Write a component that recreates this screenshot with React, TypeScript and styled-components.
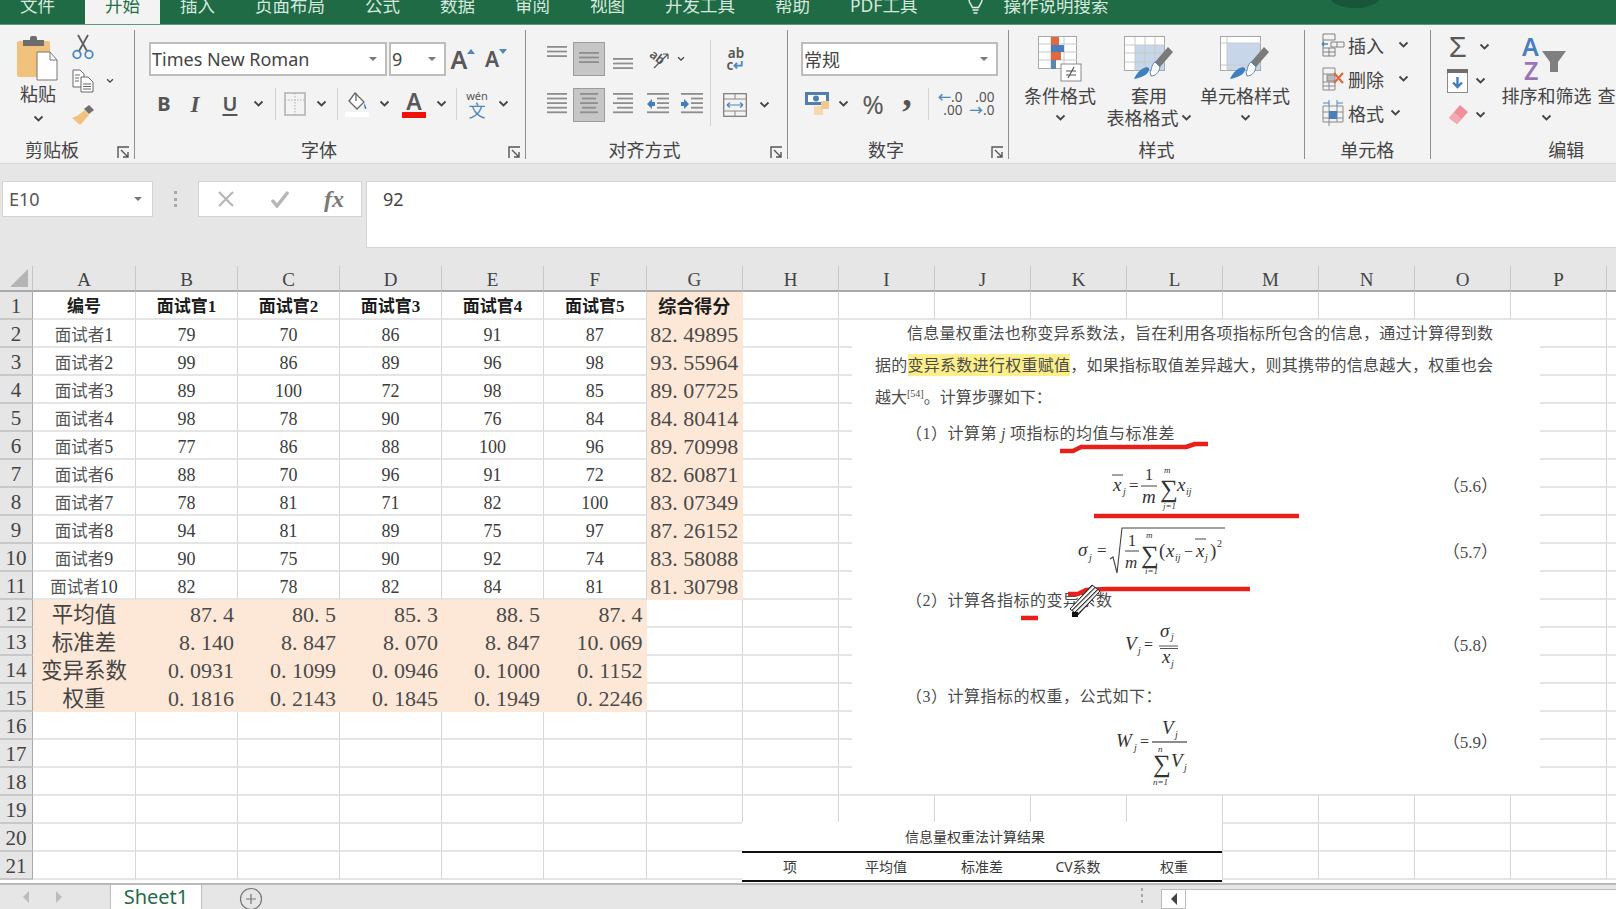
import React from "react";
import styled, { createGlobalStyle } from "styled-components";

const CJK = `"Noto Sans", "Noto Sans CJK SC", sans-serif`;
const SERIF = `"Liberation Serif", "Noto Sans CJK SC", serif`;

const Global = createGlobalStyle`
  html, body { margin: 0; padding: 0; background: #e6e6e6; overflow: hidden; }
  * { box-sizing: border-box; }
`;

const Page = styled.div`
  width: 1616px; height: 909px; display: flex; flex-direction: column; overflow: hidden;
  font-family: ${CJK}; color: #444; background: #e6e6e6;
`;

/* ---------- tabs ---------- */
const TabBar = styled.div`
  height: 25px; flex: none; background: #1f6b46; display: flex; align-items: flex-start;
  overflow: hidden; position: relative; border-bottom: 1px solid #5d9a7c;
`;
const Tab = styled.div<{ $active?: boolean }>`
  height: 32px; margin-top: -5px; line-height: 20px; font-size: 17.5px; padding: 0 20px; white-space: nowrap;
  color: ${p => (p.$active ? "#22704a" : "#d6e8de")};
  background: ${p => (p.$active ? "#f3f3f3" : "transparent")};
  margin-left: ${p => (p.$active ? "10px" : "0")};
`;
const SearchHint = styled.div`
  margin-top: -5px; line-height: 20px; font-size: 17.5px; color: #d6e8de; margin-left: 14px; white-space: nowrap;
`;
const BulbSlot = styled.div`
  margin: -8px 0 0 24px; width: 28px; height: 26px; color: #e4f0ea;
`;
const RibbonPattern = styled.div`
  position: absolute; left: 1330px; top: -14px; width: 50px; height: 22px; border-radius: 50%; background: #18563a;
`;

/* ---------- ribbon ---------- */
const Ribbon = styled.div`
  height: 139px; flex: none; background: #f3f3f3; display: flex; padding: 5px 0 4px;
  border-bottom: 1px solid #d8d8d8; overflow: hidden;
`;
const Group = styled.section<{ $w: number; $last?: boolean }>`
  width: ${p => p.$w}px; flex: none; position: relative; display: flex; flex-direction: column;
  border-right: ${p => (p.$last ? "none" : "1.5px solid #8f8f8f")};
`;
const GroupBody = styled.div`
  flex: 1; display: flex; min-height: 0;
`;
const GroupLabel = styled.div<{ $pl?: number; $pr?: number }>`
  height: 18px; line-height: 18px; font-size: 18px; color: #444; text-align: center; white-space: nowrap;
  padding-left: ${p => p.$pl ?? 0}px; padding-right: ${p => p.$pr ?? 0}px;
`;
const Launcher = styled.div`
  position: absolute; right: 4px; bottom: 4px; width: 13px; height: 13px;
`;
const Col = styled.div<{ $w?: number; $pl?: number }>`
  display: flex; flex-direction: column;
  width: ${p => (p.$w ? p.$w + "px" : "auto")}; padding-left: ${p => p.$pl ?? 0}px; flex: none;
`;
const Stack = styled.div<{ $pl?: number; $pt?: number; $mt?: number }>`
  display: flex; flex-direction: column; flex: none;
  padding-left: ${p => p.$pl ?? 0}px; padding-top: ${p => p.$pt ?? 0}px; margin-top: ${p => p.$mt ?? 0}px;
`;
const Row = styled.div<{ $h?: number; $mt?: number }>`
  display: flex; align-items: center; flex: none;
  height: ${p => p.$h ?? 34}px; margin-top: ${p => p.$mt ?? 0}px;
`;
const Slot = styled.div<{ $w: number; $pt?: number; $pb?: number }>`
  width: ${p => p.$w}px; height: 100%; flex: none; display: flex; align-items: center; justify-content: center;
  position: relative; padding-top: ${p => p.$pt ?? 0}px; padding-bottom: ${p => p.$pb ?? 0}px;
`;
const Active = styled.div`
  width: 32px; height: 34px; flex: none; display: flex; align-items: center; justify-content: center;
  background: #c6c6c6; border: 1px solid #9c9c9c;
`;
const VSep = styled.div`
  width: 1px; height: 32px; background: #d2d2d2;
`;
const VSepTall = styled.div`
  width: 1px; height: 86px; margin-top: 10px; margin-left: 1px; background: #d2d2d2; flex: none;
`;
const PasteLabel = styled.div`
  font-size: 18px; line-height: 22px; color: #444; text-align: center; margin: 2px 0 3px;
`;
const ChevWrap = styled.div`
  display: flex; justify-content: center; height: 22px; align-items: center;
`;
const Combo = styled.div<{ $w: number; $ml?: number }>`
  width: ${p => p.$w}px; height: 34px; flex: none; background: #fff; border: 2px solid #bdbdbd;
  display: flex; align-items: center; justify-content: space-between; padding: 0 7px 0 1px;
  margin-left: ${p => p.$ml ?? 0}px;
  font-size: 18px; color: #444; white-space: nowrap;
`;
const BigA = styled.span<{ $s: number }>`
  font-size: ${p => p.$s}px; font-weight: 600; color: #595959; line-height: 1;
`;
const FmtB = styled.span`
  font-size: 20px; font-weight: 700; color: #555; line-height: 1;
`;
const FmtI = styled.span`
  font-family: "Liberation Serif", serif; font-size: 23px; font-style: italic; font-weight: 700; color: #555; line-height: 1;
`;
const FmtU = styled.span`
  font-size: 20px; font-weight: 600; color: #555; line-height: 1; text-decoration: underline; text-underline-offset: 3px;
`;
const ColorA = styled.div`
  display: flex; flex-direction: column; align-items: center;
  font-size: 23px; font-weight: 600; line-height: 21px; color: #595959;
  &::after { content: ""; width: 24px; height: 6px; background: #f01208; }
`;
const Phon = styled.div`
  display: flex; flex-direction: column; align-items: center; line-height: 1;
  font-size: 11px; color: #555;
  & > b { font-weight: 400; font-size: 17px; color: #4e87bd; margin-top: 1px; }
`;
const Wrap = styled.div`
  font-size: 13.5px; line-height: 12px; text-align: center; color: #555; font-weight: 600; width: 20px;
  & > i { color: #4e87bd; font-style: normal; }
`;
const Percent = styled.span`
  font-size: 26px; color: #5a5a5a; line-height: 1;
`;
const Comma = styled.span`
  font-family: "Liberation Serif", serif; font-size: 38px; font-weight: 700; color: #555; line-height: 0; margin-top: -22px;
`;
const DecimalBox = styled.div`
  font-size: 13.5px; line-height: 13px; color: #555; text-align: right; white-space: nowrap;
  & > i { color: #4e87bd; font-style: normal; font-weight: 700; }
`;
const BigBtn = styled.div<{ $w: number; $ml?: number }>`
  width: ${p => p.$w}px; flex: none; display: flex; flex-direction: column; align-items: center; padding-top: 5px;
  margin-left: ${p => p.$ml ?? 0}px;
  font-size: 18px; line-height: 22px; color: #444; white-space: nowrap;
`;
const BigIcon = styled.div`
  height: 47px; display: flex; align-items: flex-end; margin-bottom: 3px;
`;
const CellRowText = styled.span`
  font-size: 18px; color: #444; margin-left: 3px; white-space: nowrap;
`;
const ChevGap = styled.span<{ $ml: number }>`
  margin-left: ${p => p.$ml}px; display: flex;
`;
const Sigma = styled.span`
  font-size: 29px; color: #5a5a5a; line-height: 1; font-family: "Liberation Sans", sans-serif;
`;
const StyleBody = styled(GroupBody)`
  padding-left: 5px;
`;

/* ---------- formula bar ---------- */
const FormulaBar = styled.div`
  height: 102px; flex: none; background: #e6e6e6; display: flex; align-items: flex-start; padding: 17px 0 0 2px;
`;
const NameBox = styled.div`
  width: 151px; height: 36px; background: #fff; border: 1px solid #d4d4d4; display: flex; align-items: center;
  justify-content: space-between; padding: 0 9px 0 6px; font-size: 18px; color: #555; flex: none;
`;
const Grip = styled.div`
  width: 45px; height: 36px; flex: none; display: flex; align-items: center; justify-content: center;
  &::before { content: ""; width: 3px; height: 16px;
    background: repeating-linear-gradient(#a8a8a8 0 3px, transparent 3px 6.5px); }
`;
const FxBox = styled.div`
  width: 164px; height: 36px; background: #fff; border: 1px solid #d4d4d4; flex: none; display: flex; align-items: center;
`;
const FxSlot = styled.div`
  width: 54px; display: flex; justify-content: center;
`;
const FxText = styled.span`
  font-family: "Liberation Serif", serif; font-style: italic; font-weight: 700; font-size: 24px; color: #7a7a7a; line-height: 1;
`;
const FormulaInput = styled.div`
  flex: 1; height: 67px; margin-left: 4px; background: #fff; border: 1px solid #d4d4d4; border-right: none;
  padding: 3px 0 0 16px; font-size: 18px; line-height: 28px; color: #444;
`;

/* ---------- sheet ---------- */
const Sheet = styled.div`
  flex: 1; position: relative; overflow: hidden; background: #fff;
`;
const Grid = styled.div`
  display: grid; width: 1702px;
  grid-template-columns: 33px 103px repeat(4, 102px) 102.5px 96.5px repeat(10, 96px);
  grid-template-rows: 26px repeat(21, 28px);
`;
const Corner = styled.div`
  background: #e6e6e6; border-right: 1px solid #c4c4c4; border-bottom: 2px solid #a9a9a9; display: flex;
  align-items: flex-end; justify-content: flex-end; padding: 0 4px 3px 0;
  &::after { content: ""; width: 0; height: 0; border-left: 18px solid transparent; border-bottom: 18px solid #b5b5b5; }
`;
const ColHead = styled.div`
  background: #e6e6e6; border-right: 1px solid #c8c8c8; border-bottom: 2px solid #a9a9a9;
  font-family: ${SERIF}; font-size: 19px; line-height: 27px; text-align: center; color: #444;
`;
const RowHead = styled.div`
  background: #e6e6e6; border-right: 1px solid #a9a9a9; border-bottom: 2px solid #c8c8c8;
  font-family: ${SERIF}; font-size: 21px; line-height: 27px; padding-top: 1px; text-align: center; color: #444;
`;
const Cell = styled.div<{ $fill?: boolean; $head?: boolean; $big?: boolean; $right?: boolean; $title?: boolean }>`
  background: ${p => (p.$fill ? "#fde8d8" : "#fff")};
  border-right: 1px solid ${p => (p.$fill ? "#fde8d8" : "#d6d6d6")};
  border-bottom: 2px solid ${p => (p.$fill ? "#fde8d8" : "#e5e5e5")};
  font-family: ${SERIF}; white-space: nowrap; overflow: visible;
  font-size: ${p => (p.$big ? 22 : p.$title ? 18 : p.$head ? 17 : 18)}px;
  font-weight: ${p => (p.$head ? 700 : 400)};
  color: ${p => (p.$head ? "#1c1c1c" : p.$big ? "#4a4a4a" : "#3c3c3c")};
  line-height: 26px; padding-top: 2px; text-align: ${p => (p.$right ? "right" : "center")};
  padding-right: ${p => (p.$right ? 3 : 0)}px;
`;
const Dot = styled.span`
  display: inline-block; width: 11px; text-align: left;
`;
const NameText = styled.span`
  font-size: 16.5px; color: #555;
`;
const BigLabel = styled.span`
  font-size: 21.5px; color: #444;
`;

/* ---------- pasted pictures ---------- */
const DocPicture = styled.div`
  position: absolute; left: 852px; top: 54px; width: 688px; height: 474px; background: #fff;
  padding: 0 42px 0 23px; color: #4b4b4b;
`;
const DocLine = styled.div<{ $indent?: boolean; $loose?: boolean }>`
  height: 26px; line-height: 26px; font-size: 16px; margin-bottom: 6px; white-space: nowrap;
  padding-left: ${p => (p.$indent ? 32 : 0)}px;
  width: 618px;
  text-align: justify; text-align-last: ${p => (p.$loose ? "left" : "justify")};
`;
const Mark = styled.mark`
  background: #fcef8a; color: inherit;
`;
const Cite = styled.sup`
  font-family: "Liberation Serif", serif; font-size: 10px; line-height: 0;
`;
const StepLine = styled.div<{ $mt: number }>`
  height: 26px; line-height: 26px; font-size: 16px; letter-spacing: .5px; padding-left: 31px; margin-top: ${p => p.$mt}px; white-space: nowrap;
  font-family: ${SERIF}; & i { padding: 0 4px; }
`;
const FormulaRow = styled.div<{ $h: number; $mt: number }>`
  height: ${p => p.$h}px; margin-top: ${p => p.$mt}px; display: flex; align-items: flex-start; padding-left: 195px;
`;
const EqNo = styled.div<{ $t: number }>`
  margin-left: auto; margin-top: ${p => p.$t}px; font-family: ${SERIF}; font-size: 17px; line-height: 20px;
`;
const InkLayer = styled.svg`
  position: absolute; left: 0; top: 0; pointer-events: none; overflow: visible;
`;
const TablePicture = styled.div`
  position: absolute; left: 742px; top: 556px; width: 480px; height: 60px; background: #fff;
  display: flex; flex-direction: column;
`;
const TableTitle = styled.div`
  height: 31px; line-height: 30px; font-size: 14px; text-align: center; padding-right: 14px; color: #3a3a3a; border-bottom: 2.5px solid #111;
`;
const TableHead = styled.div`
  flex: 1; display: grid; grid-template-columns: repeat(5, 96px); border-bottom: 2.5px solid #111;
`;
const TableHeadCell = styled.div`
  text-align: center; font-size: 14px; line-height: 27px; color: #3a3a3a;
`;

/* ---------- bottom ---------- */
const BottomBar = styled.div`
  height: 26px; flex: none; background: #e6e6e6; border-top: 2px solid #b9b9b9; display: flex; align-items: stretch;
  overflow: hidden; position: relative;
`;
const NavArrows = styled.div`
  width: 110px; flex: none; display: flex; align-items: center; padding-left: 22px; gap: 25px;
`;
const SheetTab = styled.div`
  width: 92px; flex: none; background: #fff; border-left: 1px solid #bcbcbc; border-right: 1px solid #bcbcbc;
  text-align: center; color: #1f6b46; font-size: 20px; line-height: 24px;
`;
const AddSlot = styled.div`
  width: 98px; flex: none; display: flex; align-items: center; justify-content: center; padding-top: 4px;
`;
const Spacer = styled.div`
  flex: 1;
`;
const GripSmall = styled.div`
  width: 2px; height: 18px; align-self: center; margin-right: 18px;
  background: repeating-linear-gradient(#a8a8a8 0 3px, transparent 3px 6px);
`;
const ScrollBtn = styled.div`
  width: 25px; flex: none; margin-top: 4px; background: #fff; border: 1px solid #bcbcbc; display: flex;
  align-items: center; justify-content: center;
`;
const ScrollTrack = styled.div`
  width: 430px; flex: none; margin-top: 4px; background: #fff; border-top: 1px solid #bcbcbc;
`;

/* ---------- icons ---------- */
const Chev = () => (
  <svg width="11" height="8" viewBox="0 0 11 8"><path d="M1.5 1.5 5.5 5.5 9.5 1.5" fill="none" stroke="#454545" strokeWidth="1.8" /></svg>
);
const Caret = () => (
  <svg width="10" height="6" viewBox="0 0 10 6"><path d="M1 1h8L5 5z" fill="#777" /></svg>
);
const LauncherIcon = () => (
  <svg width="13" height="13" viewBox="0 0 13 13">
    <path d="M1 12V1h11M4 4l7 7M11 6v5H6" fill="none" stroke="#555" strokeWidth="1.4" />
  </svg>
);
const PasteIcon = () => (
  <svg width="42" height="46" viewBox="0 0 42 46">
    <rect x="1" y="6" width="33" height="36" rx="2" fill="#f1c27b" />
    <rect x="7" y="5" width="21" height="6" fill="#6d6d6d" />
    <rect x="14" y="1" width="7" height="6" rx="2" fill="#6d6d6d" />
    <path d="M21 17h13l7 8v20H21z" fill="#fff" stroke="#777" strokeWidth="1" />
    <path d="M34 17v8h7" fill="none" stroke="#777" strokeWidth="1" />
  </svg>
);
const ScissorsIcon = () => (
  <svg width="22" height="26" viewBox="0 0 22 26">
    <path d="M6 1l9 16M16 1L7 17" stroke="#5e5e5e" strokeWidth="1.8" fill="none" />
    <circle cx="5" cy="20.5" r="3.8" fill="none" stroke="#4f86bd" strokeWidth="1.8" />
    <circle cx="17" cy="20.5" r="3.8" fill="none" stroke="#4f86bd" strokeWidth="1.8" />
  </svg>
);
const CopyIcon = () => (
  <svg width="22" height="24" viewBox="0 0 22 24" fill="#fff" stroke="#666" strokeWidth="1">
    <path d="M1 1h7l4 4v13H1z" />
    <path d="M9 8h7l5 5v10H9z" />
    <path d="M3 6h5M3 9h4M3 12h4M11 15h8M11 17.5h8M11 20h8" />
  </svg>
);
const BrushIcon = () => (
  <svg width="24" height="22" viewBox="0 0 24 22">
    <path d="M13 5l5-4 5 5-5 4z" fill="#6f6f6f" />
    <path d="M14 6l4 5-6 7-3 3-8-7 5-2z" fill="#f1c27b" />
  </svg>
);
const TriUp = ({ down }: { down?: boolean }) => (
  <svg width="8" height="6" viewBox="0 0 8 6" style={{ marginBottom: 14 }}>
    <path d={down ? "M0 0h8L4 5z" : "M0 5h8L4 0z"} fill="#4f86bd" />
  </svg>
);
const BorderIcon = () => (
  <svg width="22" height="24" viewBox="0 0 22 24">
    <rect x="1" y="1" width="20" height="22" fill="none" stroke="#b0b0b0" strokeWidth="1.5" />
    <path d="M11 1v22M1 8h20" stroke="#b0b0b0" strokeWidth="1" strokeDasharray="1.5 1.5" fill="none" />
  </svg>
);
const FillIcon = () => (
  <svg width="24" height="28" viewBox="0 0 24 28">
    <path d="M10 3l9 9-7 7-8-8z" fill="#fff" stroke="#666" strokeWidth="1.3" />
    <path d="M11 3v8" stroke="#666" strokeWidth="1.3" />
    <path d="M19 13c2 3 3 5 2 6s-2-1-2-6z" fill="#4f86bd" />
    <rect x="0" y="22" width="24" height="5" fill="#fff" />
  </svg>
);
const AlignIcon = ({ lines, arrow }: { lines: [number, number][]; arrow?: "in" | "out" }) => {
  const h = lines.length * 4.6 + 1;
  return (
    <svg width="24" height={h} viewBox={`0 0 24 ${h}`}>
      {lines.map(([x, w], i) => (
        <rect key={i} x={x} y={i * 4.6} width={w} height="1.8" fill="#8e8e8e" />
      ))}
      {arrow && (
        <path d={arrow === "in" ? "M1 11l5-5v3h3v4H6v3z" : "M9 11L4 6v3H1v4h3v3z"} fill="#3f7fbf" />
      )}
    </svg>
  );
};
const OrientIcon = () => (
  <svg width="22" height="22" viewBox="0 0 22 22">
    <text x="1" y="13" fontSize="12.5" fontWeight="600" fill="#555" fontFamily="Noto Sans" transform="rotate(38 8 10)">ab</text>
    <path d="M6 20L20 6M20 6v5M20 6h-5" stroke="#555" strokeWidth="1.2" fill="none" />
  </svg>
);
const MergeIcon = () => (
  <svg width="24" height="24" viewBox="0 0 24 24" fill="none">
    <rect x=".7" y=".7" width="22.6" height="22.6" stroke="#777" strokeWidth="1.2" />
    <path d="M1 6h22M1 18h22M12 1v5M12 18v5" stroke="#888" strokeWidth="1" />
    <path d="M4 12h16M4 12l3-2.5M4 12l3 2.5M20 12l-3-2.5M20 12l-3 2.5" stroke="#4f86bd" strokeWidth="1.2" />
  </svg>
);
const AccountingIcon = () => (
  <svg width="24" height="24" viewBox="0 0 24 24">
    <rect x="0" y="0" width="24" height="13" fill="#4f7fae" />
    <rect x="3" y="3" width="18" height="7" fill="#fff" />
    <circle cx="11" cy="6.5" r="3" fill="#4f7fae" />
    <rect x="9" y="14" width="9" height="9" fill="#f5d8ae" />
    <rect x="16" y="9" width="8" height="8" fill="#f1c98e" />
  </svg>
);
const CondIcon = () => (
  <svg width="44" height="46" viewBox="0 0 44 46">
    <rect x=".5" y=".5" width="38" height="32" fill="#fff" stroke="#a8a8a8" />
    <path d="M13 1v32M26 1v32M1 8h38M1 16h38M1 24h38" stroke="#c9c9c9" fill="none" />
    <rect x="13" y="1" width="8" height="8" fill="#e2683d" />
    <rect x="13" y="9" width="13" height="7" fill="#4a7fbd" />
    <rect x="13" y="16" width="10" height="8" fill="#e2683d" />
    <rect x="13" y="24" width="5" height="9" fill="#5c85b0" />
    <rect x="23" y="28" width="20" height="17" fill="#fff" stroke="#8a8a8a" />
    <path d="M28 35h10M28 39h10M36 31l-6 11" stroke="#555" strokeWidth="1.2" fill="none" />
  </svg>
);
const BrushOver = () => (
  <>
    <path d="M44 11l5 5-13 15-5-5z" fill="#7a7a7a" />
    <path d="M31 26l5 5c-1 6-5 9-9 9l-1-4c2-2 1-7 5-10z" fill="#fff" stroke="#4f86bd" />
    <path d="M25 32c1 5-5 9-15 11 0 0 2-6 8-10 3-2 6-2 7-1z" fill="#3f7fbf" />
  </>
);
const TableStyleIcon = () => (
  <svg width="50" height="46" viewBox="0 0 50 46">
    <rect x=".5" y=".5" width="40" height="34" fill="#fff" stroke="#a8a8a8" />
    <rect x="11" y="9" width="29" height="25" fill="#c7d6e8" />
    <path d="M11 1v34M21 1v34M31 1v34M1 9h40M1 17h40M1 26h40" stroke="#c9c9c9" fill="none" />
    <BrushOver />
  </svg>
);
const CellStyleIcon = () => (
  <svg width="50" height="46" viewBox="0 0 50 46">
    <rect x=".5" y=".5" width="40" height="34" fill="#fff" stroke="#a8a8a8" />
    <rect x="7" y="7" width="33" height="27" fill="#c7d6e8" />
    <path d="M7 1v34M1 7h40M1 29h40" stroke="#c9c9c9" fill="none" />
    <BrushOver />
  </svg>
);
const InsertIcon = () => (
  <svg width="24" height="24" viewBox="0 0 24 24" fill="none" stroke="#808080" strokeWidth="1">
    <path d="M2 1h12v6H2zM2 15h12v8H2zM2 19h12M8 15v8M2 7v8" />
    <path d="M10 9h13v5H10zM16 9v5" />
    <path d="M1 11h6M1 11l2-2M1 11l2 2" stroke="#4f86bd" strokeWidth="1.4" />
  </svg>
);
const DeleteIcon = () => (
  <svg width="24" height="24" viewBox="0 0 24 24" fill="none" stroke="#8a8a8a" strokeWidth="1">
    <path d="M2 1h12v6H2zM2 15h12v8H2zM2 19h12M8 15v8M2 7v8" />
    <rect x="6" y="8" width="8" height="6" fill="#bbb" />
    <path d="M13 6l9 10M22 6l-9 10" stroke="#e2683d" strokeWidth="2.2" />
  </svg>
);
const FormatIcon = () => (
  <svg width="24" height="26" viewBox="0 0 24 26" fill="none" stroke="#8a8a8a" strokeWidth="1">
    <path d="M2 6h20v16H2zM8 6v20M16 6v16M2 12h20M2 18h20" />
    <rect x="8" y="11" width="8" height="8" fill="#4a7fbd" stroke="none" />
    <path d="M2 3h6M16 3h6M8 0v6M16 0v6" stroke="#4f86bd" />
  </svg>
);
const FillDownIcon = () => (
  <svg width="22" height="24" viewBox="0 0 22 24">
    <rect x=".5" y=".5" width="20" height="23" fill="#fff" stroke="#8a8a8a" />
    <rect x="0" y="0" width="21" height="4" fill="#6f6f6f" />
    <path d="M10.5 8v10M6 13.5l4.5 4.5 4.5-4.5" fill="none" stroke="#3f7fbf" strokeWidth="2.4" />
  </svg>
);
const EraserIcon = () => (
  <svg width="22" height="22" viewBox="0 0 22 22">
    <path d="M13 1l8 7-11 12-8-6z" fill="#ee8f9a" />
    <path d="M2 14l5-6 8 7-5 5z" fill="#f3a9b1" />
  </svg>
);
const SortIcon = () => (
  <svg width="50" height="46" viewBox="0 0 50 46">
    <text x="0" y="20" fontFamily="Noto Sans" fontSize="25" fontWeight="600" fill="#4a7fbd">A</text>
    <text x="2" y="44" fontFamily="Noto Sans" fontSize="25" fontWeight="600" fill="#9a73b8">Z</text>
    <path d="M20 15h24l-8 11v10h-8V26z" fill="#7f7f7f" />
  </svg>
);
const Bulb = () => (
  <svg width="28" height="26" viewBox="0 0 28 26" fill="none" stroke="currentColor" strokeWidth="1.4">
    <path d="M8 8a6.5 6.5 0 0 1 13 0c0 3-2.5 4.5-3.4 7.5h-6.2C10.5 12.5 8 11 8 8zM11.5 18h6M12.5 21h4" />
  </svg>
);
const CrossIcon = () => (
  <svg width="20" height="20" viewBox="0 0 20 20"><path d="M3 3l14 14M17 3L3 17" stroke="#b6b6b6" strokeWidth="2.2" /></svg>
);
const CheckIcon = () => (
  <svg width="20" height="18" viewBox="0 0 20 18"><path d="M2 10l5 6L18 2" fill="none" stroke="#b6b6b6" strokeWidth="3.4" /></svg>
);
const NavArrow = ({ right, dark }: { right?: boolean; dark?: boolean }) => (
  <svg width="8" height="14" viewBox="0 0 8 14"><path d={right ? "M1 1l6 6-6 6z" : "M7 1L1 7l6 6z"} fill={dark ? "#444" : "#bcbcbc"} /></svg>
);
const PlusCircle = () => (
  <svg width="24" height="24" viewBox="0 0 24 24" fill="none" stroke="#777" strokeWidth="1.2">
    <circle cx="12" cy="12" r="10.5" /><path d="M12 7v10M7 12h10" />
  </svg>
);

const V = { fontFamily: "Liberation Serif", fontStyle: "italic", fill: "#333" } as const;
const Eq56 = () => (
  <svg width="160" height="66" viewBox="0 0 160 66" style={V}>
    <path d="M42 22h11M71 33h16" stroke="#444" fill="none" />
    <text x="43" y="38" fontSize="19">x</text><text x="53" y="42" fontSize="10">j</text>
    <text x="59" y="38" fontSize="17" fontStyle="normal">=</text>
    <text x="75" y="27" fontSize="16" fontStyle="normal">1</text><text x="72" y="50" fontSize="19">m</text>
    <text x="90" y="44" fontSize="25" fontStyle="normal">∑</text>
    <text x="94" y="20" fontSize="9">m</text><text x="93" y="56" fontSize="9">j=1</text>
    <text x="107" y="38" fontSize="19">x</text><text x="116" y="42" fontSize="10">ij</text>
  </svg>
);
const Eq57 = () => (
  <svg width="160" height="60" viewBox="0 0 160 60" style={V}>
    <path d="M40 38l3-2 4 16 5-45h103M55 30h14M125 18h11" stroke="#444" strokeWidth="1.1" fill="none" />
    <text x="8" y="35" fontSize="19">σ</text><text x="19" y="40" fontSize="10">j</text>
    <text x="27" y="35" fontSize="17" fontStyle="normal">=</text>
    <text x="58" y="25" fontSize="16" fontStyle="normal">1</text><text x="55" y="47" fontSize="17">m</text>
    <text x="71" y="42" fontSize="25" fontStyle="normal">∑</text>
    <text x="76" y="17" fontSize="9">m</text><text x="75" y="53" fontSize="9">i=1</text>
    <text x="89" y="36" fontSize="19" fontStyle="normal">(</text><text x="96" y="36" fontSize="19">x</text>
    <text x="105" y="40" fontSize="10">ij</text><text x="114" y="36" fontSize="16" fontStyle="normal">−</text>
    <text x="126" y="36" fontSize="19">x</text><text x="135" y="40" fontSize="10">j</text>
    <text x="140" y="36" fontSize="19" fontStyle="normal">)</text><text x="147" y="26" fontSize="10" fontStyle="normal">2</text>
  </svg>
);
const Eq58 = () => (
  <svg width="160" height="54" viewBox="0 0 160 54" style={V}>
    <path d="M89 27h19M90 29.5h18" stroke="#555" fill="none" />
    <text x="55" y="31" fontSize="19">V</text><text x="68" y="35" fontSize="10">j</text>
    <text x="74" y="31" fontSize="16" fontStyle="normal">=</text>
    <text x="90" y="18" fontSize="19">σ</text><text x="101" y="21" fontSize="10">j</text>
    <text x="92" y="44" fontSize="19">x</text><text x="101" y="48" fontSize="10">j</text>
  </svg>
);
const Eq59 = () => (
  <svg width="160" height="74" viewBox="0 0 160 74" style={V}>
    <path d="M82 27h35" stroke="#666" strokeWidth="1.4" fill="none" />
    <text x="46" y="32" fontSize="19">W</text><text x="64" y="36" fontSize="10">j</text>
    <text x="70" y="32" fontSize="16" fontStyle="normal">=</text>
    <text x="92" y="19" fontSize="19">V</text><text x="105" y="23" fontSize="10">j</text>
    <text x="88" y="37" fontSize="9">n</text>
    <text x="83" y="57" fontSize="25" fontStyle="normal">∑</text>
    <text x="83" y="70" fontSize="9">n=1</text>
    <text x="101" y="52" fontSize="19">V</text><text x="114" y="56" fontSize="10">j</text>
  </svg>
);
const Ink = () => (
  <InkLayer width="688" height="474" viewBox="0 0 688 474">
    <defs>
      <pattern id="hatch" width="3.4" height="3.4" patternUnits="userSpaceOnUse" patternTransform="rotate(45)">
        <rect width="3.4" height="3.4" fill="#fff" /><rect width="1.1" height="3.4" fill="#222" />
      </pattern>
    </defs>
    <g fill="none" stroke="#e8201a" strokeWidth="4.5" strokeLinejoin="round">
      <path d="M208 131h13l8-4h105l9-3h13" />
      <path d="M242 196h205" />
      <path d="M216 274h10l8-4 20-1h144" />
      <path d="M169 298h17" />
    </g>
    <path d="M218 289l8 6 22-24-8-6z" fill="url(#hatch)" stroke="#222" strokeWidth="1" />
    <rect x="220" y="292" width="6" height="5" fill="#111" />
  </InkLayer>
);

/* ---------- data ---------- */
const tabs = ["插入", "页面布局", "公式", "数据", "审阅", "视图", "开发工具", "帮助", "PDF工具"];
const letters = "ABCDEFGHIJKLMNOPQ".split("");
const dataRows: [string, number, number, number, number, number, string][] = [
  ["面试者1", 79, 70, 86, 91, 87, "82.49895"],
  ["面试者2", 99, 86, 89, 96, 98, "93.55964"],
  ["面试者3", 89, 100, 72, 98, 85, "89.07725"],
  ["面试者4", 98, 78, 90, 76, 84, "84.80414"],
  ["面试者5", 77, 86, 88, 100, 96, "89.70998"],
  ["面试者6", 88, 70, 96, 91, 72, "82.60871"],
  ["面试者7", 78, 81, 71, 82, 100, "83.07349"],
  ["面试者8", 94, 81, 89, 75, 97, "87.26152"],
  ["面试者9", 90, 75, 90, 92, 74, "83.58088"],
  ["面试者10", 82, 78, 82, 84, 81, "81.30798"],
];
const statRows: [string, string[]][] = [
  ["平均值", ["87.4", "80.5", "85.3", "88.5", "87.4"]],
  ["标准差", ["8.140", "8.847", "8.070", "8.847", "10.069"]],
  ["变异系数", ["0.0931", "0.1099", "0.0946", "0.1000", "0.1152"]],
  ["权重", ["0.1816", "0.2143", "0.1845", "0.1949", "0.2246"]],
];
const Dec = ({ v }: { v: string }) => {
  const [a, b] = v.split(".");
  return <>{a}<Dot>.</Dot>{b}</>;
};
const blanks = (n: number, prefix: string) =>
  Array.from({ length: n }, (_, i) => <Cell key={prefix + i} />);

export default function App() {
  return (
    <Page>
      <Global />
      <TabBar>
        <Tab>文件</Tab>
        <Tab $active>开始</Tab>
        {tabs.map(t => <Tab key={t}>{t}</Tab>)}
        <BulbSlot><Bulb /></BulbSlot>
        <SearchHint>操作说明搜索</SearchHint>
        <RibbonPattern />
      </TabBar>

      <Ribbon>
        <Group $w={135}>
          <GroupBody>
            <Col $w={60} $pl={16}>
              <Stack $pt={5}>
                <PasteIcon />
                <PasteLabel>粘贴</PasteLabel>
                <ChevWrap><Chev /></ChevWrap>
              </Stack>
            </Col>
            <Col>
              <Row><Slot $w={46}><ScissorsIcon /></Slot></Row>
              <Row><Slot $w={46}><CopyIcon /></Slot><Slot $w={8}><Chev /></Slot></Row>
              <Row><Slot $w={46}><BrushIcon /></Slot></Row>
            </Col>
          </GroupBody>
          <GroupLabel $pr={30}>剪贴板</GroupLabel>
          <Launcher><LauncherIcon /></Launcher>
        </Group>

        <Group $w={391}>
          <GroupBody>
            <Stack $pl={14} $pt={12}>
              <Row>
                <Combo $w={238}>Times New Roman<Caret /></Combo>
                <Combo $w={57} $ml={2}>9<Caret /></Combo>
                <Slot $w={34}><BigA $s={25}>A</BigA><TriUp /></Slot>
                <Slot $w={32}><BigA $s={21}>A</BigA><TriUp down /></Slot>
              </Row>
              <Row $mt={12} $h={32}>
                <Slot $w={30}><FmtB>B</FmtB></Slot>
                <Slot $w={32}><FmtI>I</FmtI></Slot>
                <Slot $w={38}><FmtU>U</FmtU></Slot>
                <Slot $w={18}><Chev /></Slot>
                <Slot $w={16}><VSep /></Slot>
                <Slot $w={24}><BorderIcon /></Slot>
                <Slot $w={28}><Chev /></Slot>
                <Slot $w={4}><VSep /></Slot>
                <Slot $w={36}><FillIcon /></Slot>
                <Slot $w={18}><Chev /></Slot>
                <Slot $w={42}><ColorA>A</ColorA></Slot>
                <Slot $w={12}><Chev /></Slot>
                <Slot $w={18}><VSep /></Slot>
                <Slot $w={24}><Phon>wén<b>文</b></Phon></Slot>
                <Slot $w={28}><Chev /></Slot>
              </Row>
            </Stack>
          </GroupBody>
          <GroupLabel $pr={22}>字体</GroupLabel>
          <Launcher><LauncherIcon /></Launcher>
        </Group>

        <Group $w={262}>
          <GroupBody>
            <Stack $pl={14} $pt={12}>
              <Row>
                <Slot $w={33} $pb={12}><AlignIcon lines={[[2, 20], [2, 20], [2, 20]]} /></Slot>
                <Active><AlignIcon lines={[[2, 20], [2, 20], [2, 20]]} /></Active>
                <Slot $w={36} $pt={12}><AlignIcon lines={[[2, 20], [2, 20], [2, 20]]} /></Slot>
                <Slot $w={36}><OrientIcon /></Slot>
                <Slot $w={8}><Chev /></Slot>
              </Row>
              <Row $mt={12}>
                <Slot $w={33}><AlignIcon lines={[[2, 20], [2, 20], [2, 20], [2, 20], [2, 20]]} /></Slot>
                <Active><AlignIcon lines={[[3, 18], [5, 14], [3, 18], [5, 14], [3, 18]]} /></Active>
                <Slot $w={36}><AlignIcon lines={[[2, 20], [6, 16], [2, 20], [6, 16], [2, 20]]} /></Slot>
                <Slot $w={34}><AlignIcon arrow="in" lines={[[1, 22], [11, 12], [11, 12], [11, 12], [1, 22]]} /></Slot>
                <Slot $w={34}><AlignIcon arrow="out" lines={[[1, 22], [11, 12], [11, 12], [11, 12], [1, 22]]} /></Slot>
              </Row>
            </Stack>
            <VSepTall />
            <Stack $pt={12}>
              <Row><Slot $w={50}><Wrap>ab<br />c<i>↵</i></Wrap></Slot></Row>
              <Row $mt={12}><Slot $w={48}><MergeIcon /></Slot><Slot $w={11}><Chev /></Slot></Row>
            </Stack>
          </GroupBody>
          <GroupLabel $pr={24}>对齐方式</GroupLabel>
          <Launcher><LauncherIcon /></Launcher>
        </Group>

        <Group $w={221}>
          <GroupBody>
            <Stack $pl={13} $pt={12}>
              <Row><Combo $w={197}>常规<Caret /></Combo></Row>
              <Row $mt={12} $h={32}>
                <Slot $w={32}><AccountingIcon /></Slot>
                <Slot $w={20}><Chev /></Slot>
                <Slot $w={40}><Percent>%</Percent></Slot>
                <Slot $w={28}><Comma>,</Comma></Slot>
                <Slot $w={14}><VSep /></Slot>
                <Slot $w={30}><DecimalBox><i>←</i>.0<br />.00</DecimalBox></Slot>
                <Slot $w={34}><DecimalBox>.00<br /><i>→</i>.0</DecimalBox></Slot>
              </Row>
            </Stack>
          </GroupBody>
          <GroupLabel $pr={24}>数字</GroupLabel>
          <Launcher><LauncherIcon /></Launcher>
        </Group>

        <Group $w={296}>
          <StyleBody>
            <BigBtn $w={92}>
              <BigIcon><CondIcon /></BigIcon>
              条件格式
              <ChevWrap><Chev /></ChevWrap>
            </BigBtn>
            <BigBtn $w={86}>
              <BigIcon><TableStyleIcon /></BigIcon>
              套用
              <Row $h={22}>表格格式<ChevGap $ml={2}><Chev /></ChevGap></Row>
            </BigBtn>
            <BigBtn $w={106}>
              <BigIcon><CellStyleIcon /></BigIcon>
              单元格样式
              <ChevWrap><Chev /></ChevWrap>
            </BigBtn>
          </StyleBody>
          <GroupLabel>样式</GroupLabel>
        </Group>

        <Group $w={125.6}>
          <GroupBody>
            <Stack $pl={16} $mt={-2}>
              <Row><InsertIcon /><CellRowText>插入</CellRowText><ChevGap $ml={14}><Chev /></ChevGap></Row>
              <Row><DeleteIcon /><CellRowText>删除</CellRowText><ChevGap $ml={14}><Chev /></ChevGap></Row>
              <Row><FormatIcon /><CellRowText>格式</CellRowText><ChevGap $ml={6}><Chev /></ChevGap></Row>
            </Stack>
          </GroupBody>
          <GroupLabel>单元格</GroupLabel>
        </Group>

        <Group $w={185.4} $last>
          <GroupBody>
            <Stack $pl={13}>
              <Row><Slot $w={28}><Sigma>Σ</Sigma></Slot><Slot $w={26}><Chev /></Slot></Row>
              <Row><Slot $w={28}><FillDownIcon /></Slot><Slot $w={18}><Chev /></Slot></Row>
              <Row><Slot $w={28}><EraserIcon /></Slot><Slot $w={18}><Chev /></Slot></Row>
            </Stack>
            <BigBtn $w={98}>
              <BigIcon><SortIcon /></BigIcon>
              排序和筛选
              <ChevWrap><Chev /></ChevWrap>
            </BigBtn>
            <BigBtn $w={18} $ml={2}>
              <BigIcon />
              查
            </BigBtn>
          </GroupBody>
          <GroupLabel $pl={86}>编辑</GroupLabel>
        </Group>
      </Ribbon>

      <FormulaBar>
        <NameBox>E10<Caret /></NameBox>
        <Grip />
        <FxBox>
          <FxSlot><CrossIcon /></FxSlot>
          <FxSlot><CheckIcon /></FxSlot>
          <FxSlot><FxText>fx</FxText></FxSlot>
        </FxBox>
        <FormulaInput>92</FormulaInput>
      </FormulaBar>

      <Sheet>
        <Grid>
          <Corner />
          {letters.map((l, i) => <ColHead key={l}>{i < 16 ? l : ""}</ColHead>)}

          <RowHead>1</RowHead>
          <Cell $head>编号</Cell>
          {[1, 2, 3, 4, 5].map(n => <Cell $head key={n}>面试官{n}</Cell>)}
          <Cell $head $title $fill>综合得分</Cell>
          {blanks(10, "r1")}

          {dataRows.map((r, i) => (
            <React.Fragment key={r[0]}>
              <RowHead>{i + 2}</RowHead>
              <Cell><NameText>{r[0].replace(/\d+$/, "")}</NameText>{r[0].match(/\d+$/)![0]}</Cell>
              {[r[1], r[2], r[3], r[4], r[5]].map((v, j) => <Cell key={j}>{v}</Cell>)}
              <Cell $big $fill><Dec v={r[6]} /></Cell>
              {blanks(10, "d" + i)}
            </React.Fragment>
          ))}

          {statRows.map((r, i) => (
            <React.Fragment key={r[0]}>
              <RowHead>{i + 12}</RowHead>
              <Cell $fill><BigLabel>{r[0]}</BigLabel></Cell>
              {r[1].map((v, j) => <Cell $big $fill $right key={j}><Dec v={v} /></Cell>)}
              {blanks(11, "s" + i)}
            </React.Fragment>
          ))}

          {[16, 17, 18, 19, 20, 21].map(n => (
            <React.Fragment key={n}>
              <RowHead>{n}</RowHead>
              {blanks(17, "e" + n)}
            </React.Fragment>
          ))}
        </Grid>

        <DocPicture>
          <DocLine $indent>信息量权重法也称变异系数法，旨在利用各项指标所包含的信息，通过计算得到数</DocLine>
          <DocLine>据的<Mark>变异系数进行权重赋值</Mark>，如果指标取值差异越大，则其携带的信息越大，权重也会</DocLine>
          <DocLine $loose>越大<Cite>[54]</Cite>。计算步骤如下：</DocLine>
          <StepLine $mt={11}>（1）计算第<i>j</i>项指标的均值与标准差</StepLine>
          <FormulaRow $h={66} $mt={6}><Eq56 /><EqNo $t={24}>（5.6）</EqNo></FormulaRow>
          <FormulaRow $h={60} $mt={2}><Eq57 /><EqNo $t={22}>（5.7）</EqNo></FormulaRow>
          <StepLine $mt={7}>（2）计算各指标的变异系数</StepLine>
          <FormulaRow $h={54} $mt={5}><Eq58 /><EqNo $t={17}>（5.8）</EqNo></FormulaRow>
          <StepLine $mt={11}>（3）计算指标的权重，公式如下：</StepLine>
          <FormulaRow $h={74} $mt={5}><Eq59 /><EqNo $t={18}>（5.9）</EqNo></FormulaRow>
          <Ink />
        </DocPicture>

        <TablePicture>
          <TableTitle>信息量权重法计算结果</TableTitle>
          <TableHead>
            {["项", "平均值", "标准差", "CV系数", "权重"].map(t => <TableHeadCell key={t}>{t}</TableHeadCell>)}
          </TableHead>
        </TablePicture>
      </Sheet>

      <BottomBar>
        <NavArrows><NavArrow /><NavArrow right /></NavArrows>
        <SheetTab>Sheet1</SheetTab>
        <AddSlot><PlusCircle /></AddSlot>
        <Spacer />
        <GripSmall />
        <ScrollBtn><NavArrow dark /></ScrollBtn>
        <ScrollTrack />
      </BottomBar>
    </Page>
  );
}
